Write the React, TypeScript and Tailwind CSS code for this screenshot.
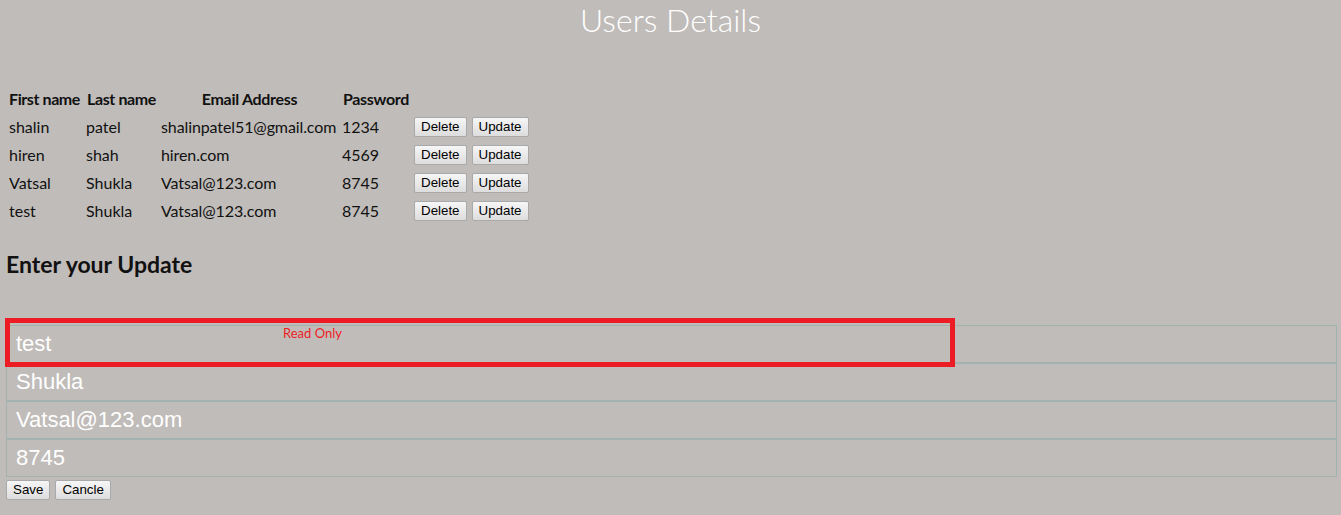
const users = [
  { first: "shalin", last: "patel", email: "shalinpatel51@gmail.com", password: "1234" },
  { first: "hiren", last: "shah", email: "hiren.com", password: "4569" },
  { first: "Vatsal", last: "Shukla", email: "Vatsal@123.com", password: "8745" },
  { first: "test", last: "Shukla", email: "Vatsal@123.com", password: "8745" },
];

const btn =
  "h-[20px] px-[6px] text-[13.33px] leading-[18px] text-black font-['Liberation_Sans',Arial,sans-serif] border border-[#a9a9a9] rounded-[2px] bg-gradient-to-b from-[#f6f6f6] to-[#dddddd]";

const field =
  "block w-[1331px] h-[38px] border border-[#a2b3af] bg-transparent pl-[9px] text-[22px] text-white font-['Liberation_Sans',Arial,sans-serif] outline-none";

export default function App() {
  return (
    <div className="min-h-[515px] bg-[#c0bcb9] px-[6px] font-['Lato','Open_Sans',sans-serif] text-[#111]">
      <h1 className="text-center text-[32px] leading-[40px] font-light text-white">Users Details</h1>

      <table className="mt-[44px] border-separate border-spacing-[2px] text-[16px]">
        <thead>
          <tr className="h-[26px]">
            <th className="w-[75px] px-[1px] text-left font-bold tracking-[-0.4px] whitespace-nowrap">First name</th>
            <th className="w-[73px] px-[1px] font-bold tracking-[-0.4px] whitespace-nowrap">Last name</th>
            <th className="w-[179px] px-[1px] font-bold tracking-[-0.3px] whitespace-nowrap">Email Address</th>
            <th className="w-[70px] px-[1px] font-bold tracking-[-0.3px] whitespace-nowrap">Password</th>
            <th className="px-[1px]"></th>
          </tr>
        </thead>
        <tbody>
          {users.map((u, i) => (
            <tr key={i} className="h-[26px]">
              <td className="px-[1px]">{u.first}</td>
              <td className="px-[1px]">{u.last}</td>
              <td className="px-[1px] whitespace-nowrap tracking-[-0.1px]">{u.email}</td>
              <td className="px-[1px]">{u.password}</td>
              <td className="px-[1px] whitespace-nowrap">
                <div className="flex gap-[5px]">
                  <button className={btn}>Delete</button>
                  <button className={btn}>Update</button>
                </div>
              </td>
            </tr>
          ))}
        </tbody>
      </table>

      <h3 className="mt-[23px] text-[23px] leading-[30px] font-bold">Enter your Update</h3>

      <div className="relative mt-[46px]">
        <input className={field} defaultValue="test" readOnly />
        <input className={field} defaultValue="Shukla" />
        <input className={field} defaultValue="Vatsal@123.com" />
        <input className={field} defaultValue="8745" />
        <div className="pointer-events-none absolute -left-[1px] -top-[7px] w-[950px] h-[49px] border-[5px] border-[#ed1c24]"></div>
        <span className="absolute left-[277px] top-[-1px] text-[13px] text-[#ed1c24]">Read Only</span>
      </div>

      <div className="mt-[3px] flex gap-[5px] pb-[15px]">
        <button className={btn}>Save</button>
        <button className={btn}>Cancle</button>
      </div>
    </div>
  );
}
